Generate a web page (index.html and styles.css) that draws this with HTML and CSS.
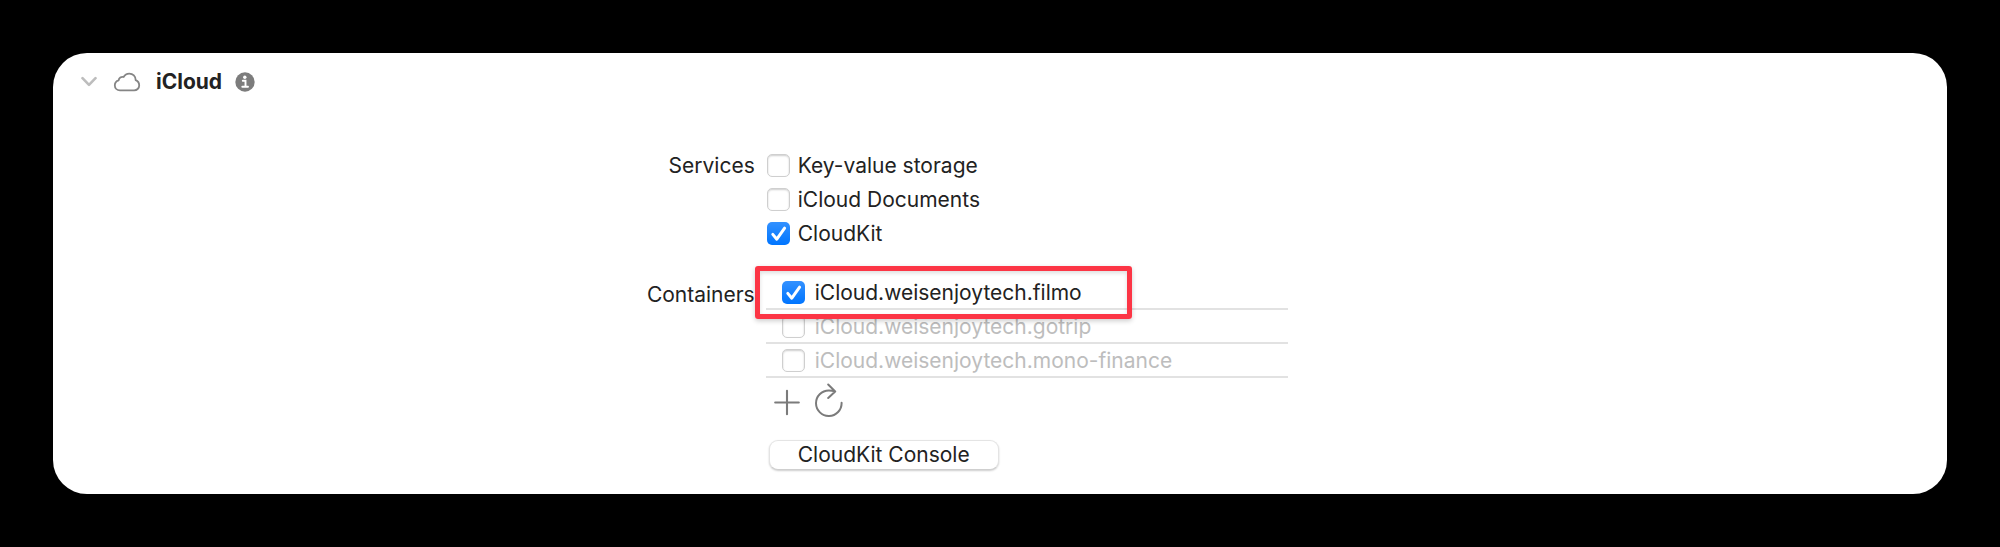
FILE: index.html
```html
<!DOCTYPE html>
<html lang="en">
<head>
<meta charset="utf-8">
<meta name="viewport" content="width=device-width, initial-scale=1">
<title>iCloud</title>
<link rel="stylesheet" href="styles.css">
</head>
<body>
<main class="panel">
  <header class="header">
    <button class="icon-button chevron" type="button" aria-label="Collapse section" aria-expanded="true">
      <svg width="16" height="12" viewBox="0 0 16 12"><path d="M1.5 2.2 8 8.8 14.5 2.2" fill="none" stroke="#bdbdbd" stroke-width="2.6" stroke-linecap="round" stroke-linejoin="round"/></svg>
    </button>
    <svg class="cloud" width="28" height="20" viewBox="0 0 28 20" aria-hidden="true"><path d="M7 18.4H21A5 5 0 0 0 26.2 13.4C26.2 10.7 24.7 9 22.7 8.2C22.7 4.3 19.9 1.6 16.3 1.6C13.6 1.6 11.7 2.9 10.6 5C8.2 4.3 5.8 6 5.7 8.3C3.3 9 1.8 11 1.8 13.3C1.8 16.2 4 18.4 7 18.4Z" fill="none" stroke="#858585" stroke-width="1.8" stroke-linejoin="round"/></svg>
    <h1 class="title">iCloud</h1>
    <button class="icon-button" type="button" aria-label="About iCloud">
      <svg width="20" height="20" viewBox="0 0 20 20"><circle cx="10" cy="10" r="9.7" fill="#7c7c7c"/><circle cx="9.8" cy="5.2" r="1.7" fill="#fff"/><path d="M7.8 8.7H10.5V14.7M7.3 14.8H13" fill="none" stroke="#fff" stroke-width="1.9" stroke-linecap="round"/></svg>
    </button>
  </header>

  <div class="form">
    <div class="row" role="group" aria-labelledby="services">
      <div class="row-label" id="services">Services</div>
      <div class="services">
        <label class="option"><input class="check" type="checkbox">Key-value storage</label>
        <label class="option"><input class="check" type="checkbox">iCloud Documents</label>
        <label class="option"><input class="check" type="checkbox" checked>CloudKit</label>
      </div>
    </div>

    <div class="row containers-row" role="group" aria-labelledby="containers">
      <div class="row-label containers-label" id="containers">Containers</div>
      <div class="containers">
        <ul class="list">
          <li class="item highlighted"><label class="option"><input class="check" type="checkbox" checked>iCloud.weisenjoytech.filmo</label></li>
          <li class="item muted"><label class="option"><input class="check" type="checkbox">iCloud.weisenjoytech.gotrip</label></li>
          <li class="item muted"><label class="option"><input class="check" type="checkbox">iCloud.weisenjoytech.mono-finance</label></li>
        </ul>
        <div class="actions">
          <button class="icon-button" type="button" aria-label="Add container">
            <svg width="26" height="34" viewBox="0 0 26 34"><path d="M1.2 19.5H24.8M13 7.7V31.3" fill="none" stroke="#7b7b7b" stroke-width="2.1" stroke-linecap="round"/></svg>
          </button>
          <button class="icon-button" type="button" aria-label="Refresh containers">
            <svg width="28" height="34" viewBox="0 0 28 34"><path d="M26.6 19.8A12.8 12.8 0 1 1 13.8 7.4C16 7.4 18 7.7 19.8 8.3M13.2 1.5 20.2 8.5 13.2 15" fill="none" stroke="#7b7b7b" stroke-width="2" stroke-linecap="round" stroke-linejoin="round"/></svg>
          </button>
        </div>
        <button class="console" type="button">CloudKit Console</button>
      </div>
    </div>
  </div>
</main>
</body>
</html>
```
FILE: styles.css
```css
*,
*::after {
  box-sizing: border-box;
}

body {
  margin: 0;
  padding: 53px;
  background: #000;
  color: #222;
  font-family: Inter, "Liberation Sans", sans-serif;
  font-size: 21px;
  line-height: 34px;
}

.panel {
  padding: 12px 0 24px;
  border-radius: 34px;
  background: #fff;
}

.header {
  display: flex;
  align-items: center;
  height: 34px;
  padding-left: 28px;
}

.title {
  margin: 0 13px 0 15px;
  font-size: 21px;
  font-weight: 700;
  line-height: 34px;
}

.icon-button {
  display: flex;
  padding: 0;
  border: 0;
  background: none;
}

.chevron {
  margin-right: 16px;
}

.form {
  padding-top: 50px;
}

.row {
  display: grid;
  grid-template-columns: 37.05% 1fr;
  column-gap: 11px;
}

.row-label {
  text-align: right;
}

.services {
  display: grid;
  justify-items: start;
  padding-left: 1px;
}

.option {
  display: flex;
  align-items: center;
  gap: 8px;
  height: 34px;
  white-space: nowrap;
}

.check {
  flex: none;
  width: 23px;
  height: 23px;
  margin: 0 0 2px;
  appearance: none;
  border: 1px solid #cfcfcf;
  border-radius: 5px;
  background: #fff;
  box-shadow: inset 0 1px 2px #0003;
}

.check:checked {
  border: 0;
  background: url("data:image/svg+xml,%3Csvg xmlns='http://www.w3.org/2000/svg' viewBox='0 0 23 23'%3E%3Cpath d='M5.8 12.4 9.8 17.2 17.6 6.2' fill='none' stroke='white' stroke-width='3' stroke-linecap='round' stroke-linejoin='round'/%3E%3C/svg%3E"), linear-gradient(#3391ff, #0075ff);
  box-shadow: none;
}

.containers-row {
  padding-top: 25px;
}

.containers {
  max-width: 522px;
}

.containers-label {
  margin-top: 2px;
}

.list {
  margin: 0;
  padding: 0;
  list-style: none;
}

.item {
  position: relative;
  padding-left: 16px;
  border-bottom: 2px solid #e2e2e2;
}

.item .option {
  height: 32px;
  padding-top: 2px;
  gap: 10px;
}

.muted {
  color: #bdbdbd;
}

.highlighted::after {
  position: absolute;
  z-index: 1;
  top: -10px;
  left: -11px;
  width: 377px;
  height: 53px;
  border: 5px solid #fc3545;
  border-radius: 3px;
  box-shadow: 0 2px 5px #0003, inset 0 2px 4px #0002;
  content: "";
  pointer-events: none;
}

.actions {
  display: flex;
  gap: 15px;
  padding: 5px 0 0 8px;
}

.console {
  display: block;
  margin: 23px 0 0 3px;
  padding: 0 28px;
  border: 1px solid #e4e4e4;
  border-bottom-color: #cfcfcf;
  border-radius: 9px;
  background: #fff;
  box-shadow: 0 1px 2px #0003;
  color: inherit;
  font: inherit;
  line-height: 28px;
}
```
